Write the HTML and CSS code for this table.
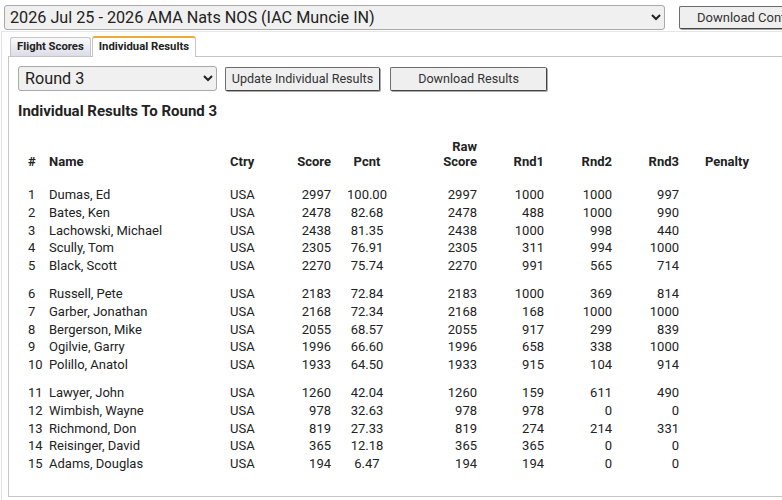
FILE: index.html
```html
<!DOCTYPE html>
<html>
<head>
<meta charset="utf-8">
<link rel="stylesheet" href="styles.css">
</head>
<body>
<div class="topbar">
  <select class="contest">
    <option>2026 Jul 25 - 2026 AMA Nats NOS (IAC Muncie IN)</option>
  </select>
  <button class="btn dl-contest">Download Contest</button>
</div>
<div class="frame">
  <ul class="tabs">
    <li class="tab">Flight Scores</li>
    <li class="tab active">Individual Results</li>
  </ul>
  <div class="panel">
    <div class="controls">
      <select class="round"><option>Round 3</option></select>
      <button class="btn update">Update Individual Results</button>
      <button class="btn download">Download Results</button>
    </div>
    <h2 class="title">Individual Results To Round 3</h2>
    <table class="results">
      <thead>
        <tr>
          <th class="c-num">#</th>
          <th class="c-name">Name</th>
          <th class="c-ctry">Ctry</th>
          <th class="c-score">Score</th>
          <th class="c-pcnt">Pcnt</th>
          <th class="c-raw">Raw<br>Score</th>
          <th class="c-rnd1">Rnd1</th>
          <th class="c-rnd2">Rnd2</th>
          <th class="c-rnd3">Rnd3</th>
          <th class="c-pen">Penalty</th>
        </tr>
        <tr class="spacer"><td colspan="10"></td></tr>
      </thead>
      <tbody>
        <tr><td class="c-num">1</td><td class="c-name">Dumas, Ed</td><td class="c-ctry">USA</td><td class="c-score">2997</td><td class="c-pcnt">100.00</td><td class="c-raw">2997</td><td class="c-rnd1">1000</td><td class="c-rnd2">1000</td><td class="c-rnd3">997</td><td class="c-pen"></td></tr>
        <tr><td class="c-num">2</td><td class="c-name">Bates, Ken</td><td class="c-ctry">USA</td><td class="c-score">2478</td><td class="c-pcnt">82.68</td><td class="c-raw">2478</td><td class="c-rnd1">488</td><td class="c-rnd2">1000</td><td class="c-rnd3">990</td><td class="c-pen"></td></tr>
        <tr><td class="c-num">3</td><td class="c-name">Lachowski, Michael</td><td class="c-ctry">USA</td><td class="c-score">2438</td><td class="c-pcnt">81.35</td><td class="c-raw">2438</td><td class="c-rnd1">1000</td><td class="c-rnd2">998</td><td class="c-rnd3">440</td><td class="c-pen"></td></tr>
        <tr><td class="c-num">4</td><td class="c-name">Scully, Tom</td><td class="c-ctry">USA</td><td class="c-score">2305</td><td class="c-pcnt">76.91</td><td class="c-raw">2305</td><td class="c-rnd1">311</td><td class="c-rnd2">994</td><td class="c-rnd3">1000</td><td class="c-pen"></td></tr>
        <tr><td class="c-num">5</td><td class="c-name">Black, Scott</td><td class="c-ctry">USA</td><td class="c-score">2270</td><td class="c-pcnt">75.74</td><td class="c-raw">2270</td><td class="c-rnd1">991</td><td class="c-rnd2">565</td><td class="c-rnd3">714</td><td class="c-pen"></td></tr>
        <tr class="gap"><td class="c-num">6</td><td class="c-name">Russell, Pete</td><td class="c-ctry">USA</td><td class="c-score">2183</td><td class="c-pcnt">72.84</td><td class="c-raw">2183</td><td class="c-rnd1">1000</td><td class="c-rnd2">369</td><td class="c-rnd3">814</td><td class="c-pen"></td></tr>
        <tr><td class="c-num">7</td><td class="c-name">Garber, Jonathan</td><td class="c-ctry">USA</td><td class="c-score">2168</td><td class="c-pcnt">72.34</td><td class="c-raw">2168</td><td class="c-rnd1">168</td><td class="c-rnd2">1000</td><td class="c-rnd3">1000</td><td class="c-pen"></td></tr>
        <tr><td class="c-num">8</td><td class="c-name">Bergerson, Mike</td><td class="c-ctry">USA</td><td class="c-score">2055</td><td class="c-pcnt">68.57</td><td class="c-raw">2055</td><td class="c-rnd1">917</td><td class="c-rnd2">299</td><td class="c-rnd3">839</td><td class="c-pen"></td></tr>
        <tr><td class="c-num">9</td><td class="c-name">Ogilvie, Garry</td><td class="c-ctry">USA</td><td class="c-score">1996</td><td class="c-pcnt">66.60</td><td class="c-raw">1996</td><td class="c-rnd1">658</td><td class="c-rnd2">338</td><td class="c-rnd3">1000</td><td class="c-pen"></td></tr>
        <tr><td class="c-num">10</td><td class="c-name">Polillo, Anatol</td><td class="c-ctry">USA</td><td class="c-score">1933</td><td class="c-pcnt">64.50</td><td class="c-raw">1933</td><td class="c-rnd1">915</td><td class="c-rnd2">104</td><td class="c-rnd3">914</td><td class="c-pen"></td></tr>
        <tr class="gap"><td class="c-num">11</td><td class="c-name">Lawyer, John</td><td class="c-ctry">USA</td><td class="c-score">1260</td><td class="c-pcnt">42.04</td><td class="c-raw">1260</td><td class="c-rnd1">159</td><td class="c-rnd2">611</td><td class="c-rnd3">490</td><td class="c-pen"></td></tr>
        <tr><td class="c-num">12</td><td class="c-name">Wimbish, Wayne</td><td class="c-ctry">USA</td><td class="c-score">978</td><td class="c-pcnt">32.63</td><td class="c-raw">978</td><td class="c-rnd1">978</td><td class="c-rnd2">0</td><td class="c-rnd3">0</td><td class="c-pen"></td></tr>
        <tr><td class="c-num">13</td><td class="c-name">Richmond, Don</td><td class="c-ctry">USA</td><td class="c-score">819</td><td class="c-pcnt">27.33</td><td class="c-raw">819</td><td class="c-rnd1">274</td><td class="c-rnd2">214</td><td class="c-rnd3">331</td><td class="c-pen"></td></tr>
        <tr><td class="c-num">14</td><td class="c-name">Reisinger, David</td><td class="c-ctry">USA</td><td class="c-score">365</td><td class="c-pcnt">12.18</td><td class="c-raw">365</td><td class="c-rnd1">365</td><td class="c-rnd2">0</td><td class="c-rnd3">0</td><td class="c-pen"></td></tr>
        <tr><td class="c-num">15</td><td class="c-name">Adams, Douglas</td><td class="c-ctry">USA</td><td class="c-score">194</td><td class="c-pcnt">6.47</td><td class="c-raw">194</td><td class="c-rnd1">194</td><td class="c-rnd2">0</td><td class="c-rnd3">0</td><td class="c-pen"></td></tr>
      </tbody>
    </table>
  </div>
</div>
</body>
</html>
```
FILE: styles.css
```css
html, body {
  margin: 0;
  padding: 0;
  background: #fff;
  overflow: hidden;
}
body {
  font-family: Roboto, "Liberation Sans", sans-serif;
  color: #222;
  width: 782px;
  height: 500px;
}
.topbar {
  display: flex;
  align-items: center;
  padding: 4px 0 0 4px;
  white-space: nowrap;
  height: 26px;
}
select {
  font-family: Roboto, "Liberation Sans", sans-serif;
  color: #222;
  background: #f0f0f0;
  border: 1px solid #a9a9a9;
  border-radius: 3px;
  padding: 0 0 0 1px;
}
.contest {
  width: 661px;
  height: 25px;
  font-size: 16.2px;
  flex: none;
}
.btn {
  font-family: Roboto, "Liberation Sans", sans-serif;
  font-size: 12.6px;
  color: #333;
  background: #efefef;
  border: 1px solid #6d6d6d;
  border-right-color: #444;
  border-bottom-color: #444;
  border-radius: 2px;
  box-shadow: 1px 1px 0 #aaa;
  padding: 0;
  flex: none;
}
.dl-contest {
  margin-left: 14px;
  width: 160px;
  height: 23px;
  text-align: left;
  padding-left: 17px;
  font-size: 13px;
}
.frame {
  margin-top: 1px;
  margin-left: 1px;
  border-left: 1px solid #ddd;
  border-top: 1px solid #e6e6e6;
  padding: 4px 0 0 6px;
  height: 470px;
}
.tabs {
  list-style: none;
  margin: 0;
  padding: 0 0 0 2px;
  display: flex;
  align-items: flex-end;
  gap: 1px;
  height: 20px;
  border-bottom: 1px solid #c5c5c5;
}
.tab {
  font-size: 11.3px;
  font-weight: bold;
  color: #222;
  height: 19px;
  box-sizing: border-box;
  border: 1px solid #c5c5c5;
  border-bottom: none;
  border-radius: 3px 3px 0 0;
  padding: 2px 6px 0 6px;
  background: linear-gradient(#fafafc, #dcdce8);
}
.tab.active {
  background: #fff;
  height: 21px;
  margin-bottom: -1px;
  border-top: 2px solid #f2a93b;
  padding: 2px 6px 0 6px;
}
.panel {
  border: 1px solid #c5c5c5;
  border-top: none;
  border-right: none;
  height: 430px;
  padding: 9px 0 0 9px;
}
.controls {
  display: flex;
  align-items: center;
  height: 25px;
}
.round {
  width: 199px;
  height: 25px;
  font-size: 16.2px;
  padding-left: 2px;
}
.update {
  margin-left: 8px;
  width: 155px;
  height: 24px;
}
.download {
  margin-left: 10px;
  width: 157px;
  height: 24px;
}
.title {
  font-size: 15px;
  font-weight: bold;
  margin: 11px 0 0 0;
  line-height: 18px;
  color: #222;
}
.results {
  border-collapse: collapse;
  table-layout: fixed;
  width: 723px;
  margin: 19px 0 0 8px;
  font-size: 13px;
  color: #222;
}
.results th, .results td {
  padding: 0;
  white-space: nowrap;
}
.results th {
  font-weight: bold;
  line-height: 15px;
  vertical-align: bottom;
}
.results td {
  height: 17.75px;
  line-height: 17.75px;
}
.results .spacer td {
  height: 17px;
}
.results tr.gap td {
  padding-top: 10.25px;
}
.results .c-num { width: 21px; text-align: left; padding-left: 2px; }
.c-name { width: 181px; text-align: left; }
.c-ctry { width: 58px; text-align: left; }
.c-score { width: 43px; text-align: right; }
.c-pcnt { width: 72px; text-align: center; }
.c-raw { width: 74px; text-align: right; }
.c-rnd1 { width: 67px; text-align: right; }
.c-rnd2 { width: 68px; text-align: right; }
.c-rnd3 { width: 67px; text-align: right; }
.results .c-pen { width: 44px; text-align: left; padding-left: 26px; }
```
